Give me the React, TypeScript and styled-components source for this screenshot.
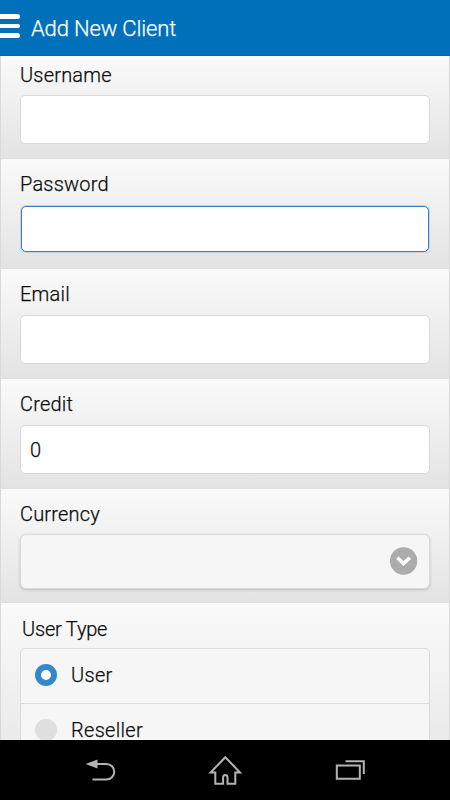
import React from "react";
import styled, { createGlobalStyle } from "styled-components";

const GlobalStyle = createGlobalStyle`
  *, *::before, *::after { box-sizing: border-box; }
  html, body { margin: 0; padding: 0; background: #000; }
  body {
    font-family: Roboto, "Liberation Sans", sans-serif;
    font-weight: 300;
    color: #0c0c0c;
    -webkit-text-stroke: 0.25px currentColor;
  }
`;

const Screen = styled.div`
  width: 450px;
  height: 800px;
  display: flex;
  flex-direction: column;
  overflow: hidden;
`;

const Header = styled.header`
  height: 56px;
  flex: none;
  display: flex;
  align-items: center;
  background: #0070bb;
  border-bottom: 1px solid #0567ae;
`;

const MenuButton = styled.button`
  width: 20px;
  height: 24px;
  margin: 0 11px 3px 0;
  padding: 0;
  border: 0;
  background: none;
  display: flex;
  flex-direction: column;
  justify-content: space-between;
`;

const MenuBar = styled.span`
  width: 20px;
  height: 4.6px;
  border-radius: 0 3px 3px 0;
  background: #fff;
`;

const Title = styled.h1`
  margin: 2px 0 0;
  font-size: 22px;
  line-height: 28px;
  font-weight: 300;
  letter-spacing: -0.15px;
  color: #fff;
`;

const Form = styled.main`
  flex: 1;
  min-height: 0;
  overflow: hidden;
  background: #e4e4e4;
  border: solid #d9d9d9;
  border-width: 0 1px;
`;

const Field = styled.section<{ $height: number; $top: number }>`
  height: ${(p) => p.$height}px;
  padding: ${(p) => p.$top}px 19px 0 19px;
  background: linear-gradient(#fafafa, #e3e3e3);
  border-bottom: 1px solid #dedede;
`;

const Label = styled.label<{ $indent?: number; $spacing?: number }>`
  display: block;
  height: 24px;
  padding-left: ${(p) => p.$indent ?? 0}px;
  font-size: 20px;
  line-height: 24px;
  letter-spacing: ${(p) => p.$spacing ?? 0.2}px;
  white-space: nowrap;
`;

const Input = styled.input<{ $focused?: boolean; $gap?: number }>`
  display: block;
  width: ${(p) => (p.$focused ? "calc(100% - 2px)" : "100%")};
  height: ${(p) => (p.$focused ? 46 : 49)}px;
  margin: ${(p) => p.$gap ?? 8}px ${(p) => (p.$focused ? 1 : 0)}px 0;
  padding: 0 9px;
  font: 300 20px Roboto, sans-serif;
  -webkit-text-stroke: 0.25px currentColor;
  letter-spacing: -0.4px;
  color: #0c0c0c;
  background: #fff;
  border: 1px solid ${(p) => (p.$focused ? "#3a7cc0" : "#d8d8d8")};
  border-radius: 5px;
  outline: none;
  box-shadow: ${(p) => (p.$focused ? "0 0 0 1px #c9d3e0" : "none")};
`;

const Select = styled.div`
  height: 55px;
  margin-top: 8px;
  padding: 0 11px 1px 0;
  display: flex;
  align-items: center;
  justify-content: flex-end;
  background: #f6f6f6;
  border: 1px solid #dadada;
  border-radius: 6px;
  box-shadow: 0 1px 3px rgba(0, 0, 0, 0.18);
`;

const RadioGroup = styled.div`
  margin-top: 7px;
  background: #f6f6f6;
  border: 1px solid #dadada;
  border-radius: 5px 5px 0 0;
`;

const RadioRow = styled.div`
  height: 55px;
  padding: 0 0 2px 14px;
  display: flex;
  align-items: center;
  gap: 14px;
  font-size: 20px;
  line-height: 24px;
  border-bottom: 1px solid #dadada;
`;

const RadioMark = styled.span<{ $checked?: boolean }>`
  width: 22px;
  height: 22px;
  border-radius: 50%;
  border: 6px solid ${(p) => (p.$checked ? "#3388cc" : "#dfdfdf")};
  background: ${(p) => (p.$checked ? "#fff" : "#dfdfdf")};
`;

const RadioText = styled.span`
  letter-spacing: 0.3px;
`;

const NavBar = styled.nav`
  height: 60px;
  flex: none;
  display: grid;
  grid-template-columns: repeat(3, 125px);
  justify-content: center;
  background: #000;
`;

const NavIcon = styled.svg`
  width: 125px;
  height: 60px;
  fill: none;
  stroke: #b4b4b4;
  stroke-width: 2;
`;

export default function App() {
  return (
    <Screen>
      <GlobalStyle />
      <Header>
        <MenuButton aria-label="Menu">
          <MenuBar />
          <MenuBar />
          <MenuBar />
        </MenuButton>
        <Title>Add New Client</Title>
      </Header>
      <Form>
        <Field $height={103} $top={7}>
          <Label htmlFor="username">Username</Label>
          <Input id="username" />
        </Field>
        <Field $height={110} $top={13}>
          <Label htmlFor="password">Password</Label>
          <Input id="password" type="password" $focused $gap={10} />
        </Field>
        <Field $height={110} $top={13}>
          <Label htmlFor="email">Email</Label>
          <Input id="email" $gap={9} />
        </Field>
        <Field $height={110} $top={13}>
          <Label htmlFor="credit">Credit</Label>
          <Input id="credit" defaultValue="0" $gap={9} />
        </Field>
        <Field $height={114} $top={13}>
          <Label>Currency</Label>
          <Select role="combobox" aria-label="Currency">
            <svg width="28" height="28" viewBox="0 0 28 28">
              <circle cx="13.6" cy="14" r="13.7" fill="#acacac" />
              <path d="M7.4 10.8l6.2 5.8 6.2-5.8" fill="none" stroke="#fff" strokeWidth="3.6" />
            </svg>
          </Select>
        </Field>
        <Field $height={200} $top={14}>
          <Label $indent={2} $spacing={-0.2}>User Type</Label>
          <RadioGroup role="radiogroup">
            <RadioRow>
              <RadioMark $checked />
              <RadioText>User</RadioText>
            </RadioRow>
            <RadioRow>
              <RadioMark />
              <RadioText>Reseller</RadioText>
            </RadioRow>
          </RadioGroup>
        </Field>
      </Form>
      <NavBar>
        <NavIcon viewBox="0 0 125 60">
          <path d="M59 24h9.5a7.7 7.7 0 0 1 0 15.5H54.5" />
          <path d="M48.5 24l12-4.5v9z" transform="translate(-1 0)" fill="#b4b4b4" stroke="none" />
        </NavIcon>
        <NavIcon viewBox="0 0 125 60">
          <path d="M62.3 17.2L47.6 32.5h4.7v11.3h7.8v-6.3q0-2.6 2.2-2.6t2.2 2.6v6.3h7.8V32.5h4.7z" />
        </NavIcon>
        <NavIcon viewBox="0 0 125 60">
          <path d="M48.8 25.5h23v13.3h-23zM57.5 21.3h18.3V34" />
        </NavIcon>
      </NavBar>
    </Screen>
  );
}
